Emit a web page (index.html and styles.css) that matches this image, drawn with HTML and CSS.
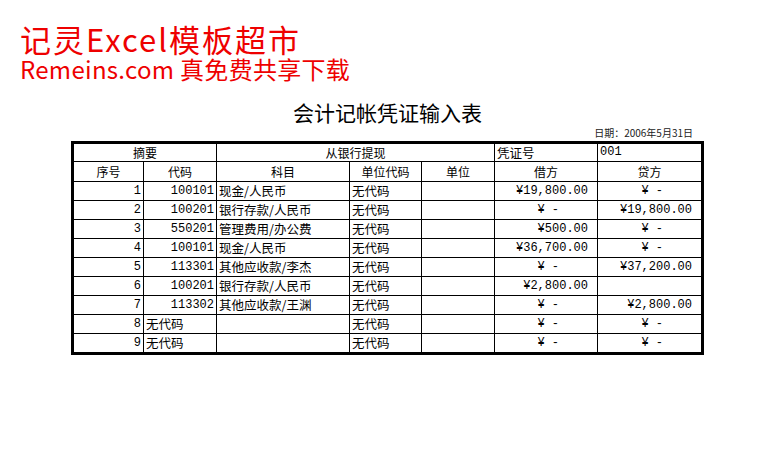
FILE: index.html
```html
<!DOCTYPE html>
<html lang="zh-CN">
<head>
<meta charset="utf-8">
<title>会计记帐凭证输入表</title>
<link rel="stylesheet" href="styles.css">
</head>
<body>
<div class="brand">
  <div class="brand-line1">记灵Excel模板超市</div>
  <div class="brand-line2">Remeins.com 真免费共享下载</div>
</div>
<h1 class="title">会计记帐凭证输入表</h1>
<div class="sheet">
  <div class="date">日期：2006年5月31日</div>
  <table class="voucher">
    <colgroup>
      <col class="c1"><col class="c2"><col class="c3"><col class="c4"><col class="c5"><col class="c6"><col class="c7">
    </colgroup>
    <tr class="hdr1">
      <td colspan="2" class="center">摘要</td>
      <td colspan="3" class="center">从银行提现</td>
      <td class="left">凭证号</td>
      <td class="left last num">001</td>
    </tr>
    <tr class="hdr2">
      <td class="center">序号</td>
      <td class="center">代码</td>
      <td class="center">科目</td>
      <td class="center">单位代码</td>
      <td class="center">单位</td>
      <td class="center">借方</td>
      <td class="center last">贷方</td>
    </tr>
    <tr>
      <td class="right num">1</td><td class="right num">100101</td><td class="left">现金/人民币</td><td class="left">无代码</td><td></td>
      <td class="amt num">¥19,800.00</td><td class="amt dash num last">¥ -</td>
    </tr>
    <tr>
      <td class="right num">2</td><td class="right num">100201</td><td class="left">银行存款/人民币</td><td class="left">无代码</td><td></td>
      <td class="amt dash num">¥ -</td><td class="amt num last">¥19,800.00</td>
    </tr>
    <tr>
      <td class="right num">3</td><td class="right num">550201</td><td class="left">管理费用/办公费</td><td class="left">无代码</td><td></td>
      <td class="amt num">¥500.00</td><td class="amt dash num last">¥ -</td>
    </tr>
    <tr>
      <td class="right num">4</td><td class="right num">100101</td><td class="left">现金/人民币</td><td class="left">无代码</td><td></td>
      <td class="amt num">¥36,700.00</td><td class="amt dash num last">¥ -</td>
    </tr>
    <tr>
      <td class="right num">5</td><td class="right num">113301</td><td class="left">其他应收款/李杰</td><td class="left">无代码</td><td></td>
      <td class="amt dash num">¥ -</td><td class="amt num last">¥37,200.00</td>
    </tr>
    <tr>
      <td class="right num">6</td><td class="right num">100201</td><td class="left">银行存款/人民币</td><td class="left">无代码</td><td></td>
      <td class="amt num">¥2,800.00</td><td class="last"></td>
    </tr>
    <tr>
      <td class="right num">7</td><td class="right num">113302</td><td class="left">其他应收款/王渊</td><td class="left">无代码</td><td></td>
      <td class="amt dash num">¥ -</td><td class="amt num last">¥2,800.00</td>
    </tr>
    <tr>
      <td class="right num">8</td><td class="left">无代码</td><td></td><td class="left">无代码</td><td></td>
      <td class="amt dash num">¥ -</td><td class="amt dash num last">¥ -</td>
    </tr>
    <tr class="final">
      <td class="right num">9</td><td class="left">无代码</td><td></td><td class="left">无代码</td><td></td>
      <td class="amt dash num">¥ -</td><td class="amt dash num last">¥ -</td>
    </tr>
  </table>
</div>
</body>
</html>
```

FILE: styles.css
```css
html, body {
  margin: 0;
  padding: 0;
  background: #ffffff;
}
body {
  font-family: "Noto Sans CJK SC", "Noto Sans", sans-serif;
  color: #000;
}
.brand {
  padding: 23px 0 0 20px;
  color: #ee0000;
}
.brand-line1 {
  font-size: 31px;
  letter-spacing: 2px;
  line-height: 31px;
  height: 31px;
}
.brand-line2 {
  font-size: 24px;
  letter-spacing: 0.3px;
  line-height: 29px;
  height: 29px;
}
.title {
  margin: 16px 0 0 0;
  font-size: 21px;
  font-weight: normal;
  line-height: 26px;
  text-align: center;
}
.sheet {
  width: 633px;
  margin: 2px 0 0 71px;
}
.date {
  font-size: 10px;
  line-height: 12px;
  text-align: right;
  padding-right: 11px;
  color: #222;
}
.voucher {
  margin-top: 2px;
  border: 3px solid #000;
  border-collapse: separate;
  border-spacing: 0;
  table-layout: fixed;
  width: 633px;
  font-size: 12px;
}
.c1 { width: 70px; }
.c2 { width: 73px; }
.c3 { width: 133px; }
.c4 { width: 72px; }
.c5 { width: 73px; }
.c6 { width: 103px; }
.c7 { width: 103px; }
.voucher td {
  padding: 0 2px;
  height: 18px;
  line-height: 18px;
  border-right: 1px solid #000;
  border-bottom: 1px solid #000;
  white-space: nowrap;
  overflow: hidden;
  vertical-align: middle;
}
.voucher td.last { border-right: none; }
.voucher .hdr1 td { height: 17px; line-height: 17px; }
.voucher .hdr2 td { height: 19px; line-height: 19px; }
.voucher .final td { border-bottom: none; }
.center { text-align: center; }
.left { text-align: left; }
.voucher td.left { padding-left: 2px; font-size: 12.5px; }
.right { text-align: right; }
.num {
  font-family: "Liberation Mono", "DejaVu Sans Mono", monospace;
}
.voucher td.num.left { font-size: 12px; }
.voucher td.amt {
  text-align: right;
  padding-right: 9px;
}
.voucher td.dash {
  padding-right: 38px;
}
```
